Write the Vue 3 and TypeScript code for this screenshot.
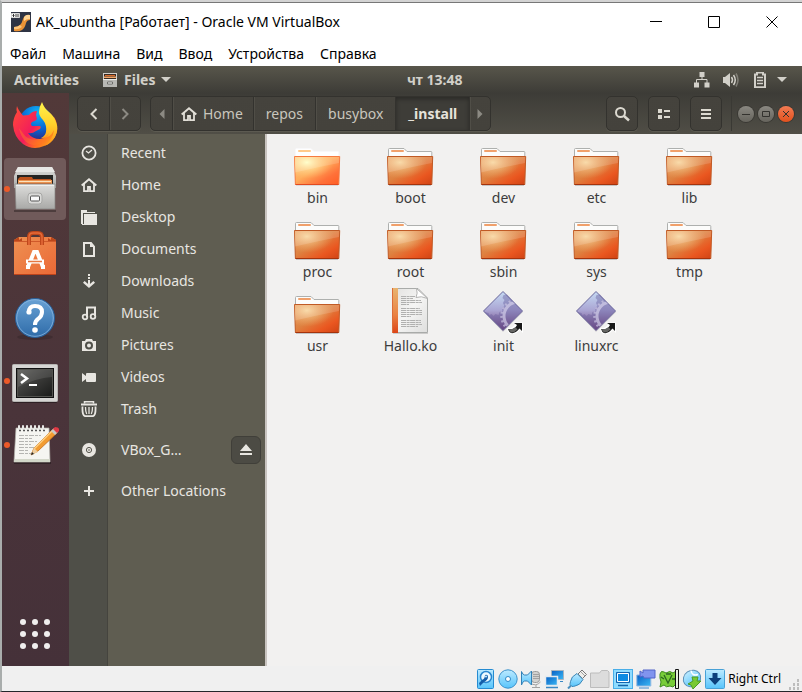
<script setup lang="ts">
interface Place {
  label: string
  icon: string
  spaced?: boolean
  ejectable?: boolean
}

interface Entry {
  name: string
  icon: string
}

interface Launcher {
  name: string
  icon: string
  running?: boolean
  active?: boolean
}

const menus: string[] = ['Файл', 'Машина', 'Вид', 'Ввод', 'Устройства', 'Справка']

const launchers: Launcher[] = [
  { name: 'Firefox', icon: 'firefox' },
  { name: 'Files', icon: 'cabinet', running: true, active: true },
  { name: 'Ubuntu Software', icon: 'software' },
  { name: 'Help', icon: 'help' },
  { name: 'Terminal', icon: 'terminal', running: true },
  { name: 'Text Editor', icon: 'notepad', running: true },
]

const places: Place[] = [
  { label: 'Recent', icon: 'p-recent' },
  { label: 'Home', icon: 'p-home' },
  { label: 'Desktop', icon: 'p-desktop' },
  { label: 'Documents', icon: 'p-document' },
  { label: 'Downloads', icon: 'p-download' },
  { label: 'Music', icon: 'p-music' },
  { label: 'Pictures', icon: 'p-camera' },
  { label: 'Videos', icon: 'p-video' },
  { label: 'Trash', icon: 'p-trash' },
  { label: 'VBox_G…', icon: 'p-disc', spaced: true, ejectable: true },
  { label: 'Other Locations', icon: 'p-plus', spaced: true },
]

const entries: Entry[] = [
  { name: 'bin', icon: 'folder-lit' },
  { name: 'boot', icon: 'folder' },
  { name: 'dev', icon: 'folder' },
  { name: 'etc', icon: 'folder' },
  { name: 'lib', icon: 'folder' },
  { name: 'proc', icon: 'folder' },
  { name: 'root', icon: 'folder' },
  { name: 'sbin', icon: 'folder' },
  { name: 'sys', icon: 'folder' },
  { name: 'tmp', icon: 'folder' },
  { name: 'usr', icon: 'folder' },
  { name: 'Hallo.ko', icon: 'text-file' },
  { name: 'init', icon: 'exec-link' },
  { name: 'linuxrc', icon: 'exec-link' },
]

const devices: Entry[] = [
  { name: 'Hard disks', icon: 's-disk' },
  { name: 'Optical drives', icon: 's-optical' },
  { name: 'Audio', icon: 's-audio' },
  { name: 'Network', icon: 's-network' },
  { name: 'USB', icon: 's-usb' },
  { name: 'Shared folders', icon: 's-shared' },
  { name: 'Display', icon: 's-display' },
  { name: 'Recording', icon: 's-record' },
  { name: 'Execution engine', icon: 's-engine' },
  { name: 'Mouse integration', icon: 's-mouse' },
  { name: 'Keyboard capture', icon: 's-host' },
]
</script>

<template>
  <svg class="defs" aria-hidden="true">
    <defs>
      <linearGradient id="g-orange" x1="0" y1="0" x2="1" y2="1">
        <stop offset="0" stop-color="#e9985c" /><stop offset=".45" stop-color="#de8241" /><stop offset=".75" stop-color="#ea5720" /><stop offset="1" stop-color="#cf4314" />
      </linearGradient>
      <radialGradient id="g-glow" cx=".27" cy=".2" r=".6">
        <stop offset="0" stop-color="#f8d59c" /><stop offset="1" stop-color="#f0b070" stop-opacity="0" />
      </radialGradient>
      <linearGradient id="g-lit" x1="0" y1="0" x2="1" y2="1">
        <stop offset="0" stop-color="#ffc47c" /><stop offset=".45" stop-color="#ffad5c" /><stop offset=".75" stop-color="#ff7139" /><stop offset="1" stop-color="#ff5d24" />
      </linearGradient>
      <radialGradient id="g-litglow" cx=".27" cy=".2" r=".6">
        <stop offset="0" stop-color="#ffffc4" /><stop offset="1" stop-color="#ffcf80" stop-opacity="0" />
      </radialGradient>
      <linearGradient id="g-strip" x1="0" y1="0" x2="0" y2="1">
        <stop offset="0" stop-color="#e8b470" /><stop offset=".6" stop-color="#ea8142" /><stop offset="1" stop-color="#dc4517" />
      </linearGradient>
      <linearGradient id="g-paper" x1="0" y1="0" x2="1" y2="1">
        <stop offset="0" stop-color="#e2e1df" /><stop offset=".5" stop-color="#f5f5f4" /><stop offset="1" stop-color="#dededd" />
      </linearGradient>
      <linearGradient id="g-diamond" x1="0" y1="0" x2="0" y2="1">
        <stop offset="0" stop-color="#c5daf3" /><stop offset=".48" stop-color="#aaa5d3" /><stop offset="1" stop-color="#68366f" />
      </linearGradient>
      <linearGradient id="g-blue" x1="0" y1="0" x2="0" y2="1">
        <stop offset="0" stop-color="#bdeaff" /><stop offset="1" stop-color="#57c4fb" />
      </linearGradient>
      <linearGradient id="g-deep" x1="0" y1="0" x2="1" y2="1">
        <stop offset="0" stop-color="#0860c4" /><stop offset="1" stop-color="#3bb8f5" />
      </linearGradient>
      <linearGradient id="g-metal" x1="0" y1="0" x2="0" y2="1">
        <stop offset="0" stop-color="#dededc" /><stop offset="1" stop-color="#a9a9a7" />
      </linearGradient>
      <linearGradient id="g-fox" x1="0" y1=".2" x2="1" y2=".9">
        <stop offset="0" stop-color="#ff453b" /><stop offset=".45" stop-color="#f21c5c" /><stop offset=".7" stop-color="#ff6c22" /><stop offset="1" stop-color="#ffb118" />
      </linearGradient>
      <linearGradient id="g-flame" x1="0" y1="0" x2="0" y2="1">
        <stop offset="0" stop-color="#fff34c" /><stop offset=".5" stop-color="#ffd22b" /><stop offset="1" stop-color="#ff9019" />
      </linearGradient>
      <radialGradient id="g-globe" cx=".55" cy=".2" r=".8">
        <stop offset="0" stop-color="#10b5f6" /><stop offset=".6" stop-color="#0766d4" /><stop offset="1" stop-color="#2b2c86" />
      </radialGradient>
      <linearGradient id="g-bag" x1="0" y1="0" x2="1" y2="1">
        <stop offset="0" stop-color="#ee9152" /><stop offset="1" stop-color="#eb6836" />
      </linearGradient>
      <linearGradient id="g-help" x1="0" y1="0" x2="0" y2="1">
        <stop offset="0" stop-color="#69a2d5" /><stop offset="1" stop-color="#2e6ba8" />
      </linearGradient>
      <linearGradient id="g-term" x1="0" y1="0" x2="1" y2="1">
        <stop offset="0" stop-color="#5b5b58" /><stop offset=".45" stop-color="#3c3c3a" /><stop offset="1" stop-color="#191a19" />
      </linearGradient>
    </defs>

    <!-- file icons -->
    <symbol id="folder" viewBox="0 0 48 48">
      <path d="M2 47.5h42" stroke="#00000030" />
      <path d="M1.500 19V11.500q0-1 1-1H17l3 3h24q.8 0 .8.8V19z" fill="#fcfcfb" stroke="#aeb0ae" />
      <rect x="4" y="12" width="13" height="2" rx="1" fill="#f0a06b" />
      <path d="M.5 18.500h45.200L44.800 46.500H1.400z" fill="url(#g-orange)" stroke="#c05a25" />
      <path d="M.8 19h44.700l-.8 27H1.500z" fill="url(#g-glow)" />
      <path d="M1 19h44l-.1 6Q24 29 1 34.500z" fill="#fff" opacity=".15" />
      <path d="M1.500 46.500h43" stroke="#a5330c" />
    </symbol>
    <symbol id="folder-lit" viewBox="0 0 48 48">
      <path d="M2 47.500h42" stroke="#00000018" />
      <path d="M1.500 19V11.500q0-1 1-1H17l3 3h24q.8 0 .8.800V19z" fill="#fff" stroke="#f8f8fa" />
      <rect x="4" y="12" width="13" height="2" rx="1" fill="#ffca8b" />
      <path d="M.5 18.500h45.200L44.800 46.500H1.400z" fill="url(#g-lit)" stroke="#f77b40" />
      <path d="M.8 19h44.700l-.8 27H1.500z" fill="url(#g-litglow)" />
      <path d="M1 19h44l-.1 6Q24 29 1 34.500z" fill="#fff" opacity=".15" />
      <path d="M1.500 46.500h43" stroke="#e24a20" />
    </symbol>
    <symbol id="text-file" viewBox="0 0 48 48">
      <path d="M6 47.500h35" stroke="#00000028" />
      <path d="M5.500 2.500H31L40.500 12v34.500h-35z" fill="url(#g-paper)" stroke="#a9aba9" />
      <path d="M5 2h6v45H5z" fill="url(#g-strip)" />
      <path d="M5.500 2v45" stroke="#dc6c38" />
      <path d="M29.500 2.500q1.500 5-.5 9 5-2 11.500 1z" fill="#fff" stroke="#b4b4b3" />
      <path d="M14 10.500h14M14 12.500h12M14 14.500h20M14 16.500h21M14 18.500h8M14 22.500h19M14 24.500h21M14 26.500h21M14 28.500h21M14 30.500h10M14 34.500h20M14 36.500h20M14 38.500h21M14 40.500h17" stroke="#b0b0af" stroke-dasharray="5 .6 3 .5" />
    </symbol>
    <clipPath id="diamond-clip"><path d="M23 6 42 25 23 44 4 25z" /></clipPath>
    <symbol id="exec-link" viewBox="0 0 48 48">
      <path d="M23 7l20 19-20 20L4 26z" fill="#00000020" />
      <path d="M23 5.500 42.500 25 23 44.500 3.500 25z" fill="url(#g-diamond)" stroke="#68649a" stroke-linejoin="round" />
      <path d="M4.500 26l4 1 1 2 2-1 2 2 2-2 3 1 1-3 3-1-.5-3 2.500-2-1.500-3 1.500-3-2-2 1-3 3.500-.5L42 25 27 40l-4 4z" fill="#655b9b" opacity=".42" />
      <circle cx="38" cy="30" r="14" fill="none" stroke="#d9d4ec" stroke-width="3" opacity=".65" clip-path="url(#diamond-clip)" />
      <circle cx="38" cy="30" r="16.500" fill="none" stroke="#c9c2e1" stroke-width="2.500" stroke-dasharray="2 2.500" opacity=".7" clip-path="url(#diamond-clip)" />
      <path d="M27 42q6 1 8-4l-3-1.500h11V47l-3-3q-4 5-10 4-3-2-3-6z" fill="#fff" />
      <path d="M28 43q7 1 9-4l-3-2h8v8l-2.500-2.500Q35 48 31 47q-2-1-3-4z" fill="#191919" />
      <path d="M28 43q5 1 7.500-2l2 2.500Q34 47 31 46.500z" fill="#666664" />
    </symbol>

    <!-- launcher icons -->
    <symbol id="firefox" viewBox="0 0 48 48">
      <circle cx="25" cy="22" r="17" fill="url(#g-globe)" />
      <path d="M6 5q-1 4 0 6-4 6-4 13 1 12 10 19 10 7 21 2 10-4 13-14 1-9-3-15-3 8-4 14-3 7-10 8-8 0-12-6 4 1 8-2l4-2q2-3-1-3h-7q-2-2 0-4 4-1 5-3l-1-4 1-4q-5 0-8 4l-6 .5Q7 9 6 5z" fill="url(#g-fox)" />
      <path d="M31 1q-3 5-3 10 0 4 4 8 4 5 3 12-1 4-5 6 9 1 13-8-1 10-10 16 7-2 11-9 4-8 1-15-2-6-7-10-5-4-7-10z" fill="url(#g-flame)" />
      <path d="M11 31q5 8 14 8 8-1 13-7-4 13-16 12Q11 42 8 27z" fill="#ff7d24" opacity=".45" />
    </symbol>
    <symbol id="cabinet" viewBox="0 0 48 48">
      <path d="M3 46h42" stroke="#00000050" stroke-width="2" />
      <path d="M7 2h34l4 9v12H3V11z" fill="url(#g-metal)" />
      <path d="M7 2h34l3 5H4z" fill="#e7e7e5" />
      <path d="M6 10h36v11H6z" fill="#252422" />
      <path d="M7 14l2-2h12l1 2h18v7H7z" fill="#bd521c" />
      <path d="M7 15h34v5H7z" fill="#eb9450" /><path d="M8 16.500h32" stroke="#fae1bd" /><path d="M8 18.500h32" stroke="#d36b2c" />
      <path d="M4 19h40v25H5z" fill="url(#g-metal)" stroke="#858583" stroke-width=".7" />
      <path d="M5 20.500h38" stroke="#efefee" />
      <rect x="17" y="28" width="14" height="11" rx="3" fill="#dadad8" stroke="#a7a7a5" />
      <rect x="19.500" y="31" width="9" height="5" rx="1" fill="#fafafa" stroke="#555" />
    </symbol>
    <symbol id="mini-cabinet" viewBox="0 0 16 16">
      <path d="M1 1h14v14H1z" fill="#cfcfcb" /><path d="M2 2h12v5H2z" fill="#3a2c22" />
      <path d="M3 3h10v1H3z" fill="#d86a2b" /><path d="M2 4.500h12V6H2z" fill="#f2a768" />
      <path d="M1 7h14v8H1z" fill="#b8b8b4" /><path d="M1 7.500h14" stroke="#ecece8" />
      <path d="M5.500 10h5v2h-5z" fill="#f6f6f4" stroke="#6d6d69" />
    </symbol>
    <symbol id="software" viewBox="0 0 48 48">
      <path d="M3 11l5-3h32l5 3v35H3z" fill="url(#g-bag)" />
      <path d="M3 11l5-3v3l3-2v3H3zM45 11l-5-3v3l-3-2v3h8z" fill="#bc461a" />
      <path d="M3 12.500h42" stroke="#cf592a" /><path d="M3 45.500h42" stroke="#bd431b" />
      <path d="M18 16V8q0-4 4-4h5q4 0 4 4v8" fill="none" stroke="#bf471b" stroke-width="4" />
      <path d="M18 16V8q0-4 4-4h5q4 0 4 4v8" fill="none" stroke="#e66b3a" stroke-width="1.500" />
      <path d="M17 38l6-15h3l6 15M15 32.500h18M15 38h4M30 38h4" fill="none" stroke="#fff" stroke-width="4" />
      <path d="M17 32.500h14" stroke="#e77742" stroke-width="1.500" />
    </symbol>
    <symbol id="help" viewBox="0 0 48 48">
      <ellipse cx="24" cy="44" rx="18" ry="3" fill="#00000026" />
      <circle cx="24" cy="25" r="19.500" fill="url(#g-help)" stroke="#285f99" />
      <circle cx="24" cy="25" r="18.300" fill="none" stroke="#8ab6df" stroke-width=".8" />
      <path d="M18 19q0-6 6-6 7 0 7 6 0 4-4 7-3 2-3 6" fill="none" stroke="#fff" stroke-width="4" />
      <circle cx="18" cy="19" r="2.600" fill="#fff" /><circle cx="24" cy="37" r="2.800" fill="#fff" />
    </symbol>
    <symbol id="terminal" viewBox="0 0 48 48">
      <rect x="2" y="44" width="44" height="2" rx="1" fill="#00000060" />
      <rect x="1.500" y="7.500" width="45" height="37" rx="1" fill="#d6d5d3" stroke="#b6b5b3" />
      <rect x="5" y="11" width="38" height="30" fill="#111" />
      <rect x="6.500" y="12.500" width="35" height="27" fill="url(#g-term)" stroke="#53534f" />
      <path d="M7 13h34v7Q25 21 7 30z" fill="#fff" opacity=".1" />
      <path d="M10 17l6 4.500-6 4.500" fill="none" stroke="#fff" stroke-width="2.500" /><path d="M18 28h8" stroke="#fff" stroke-width="2" />
    </symbol>
    <symbol id="notepad" viewBox="0 0 48 48">
      <path d="M3 41h37v2H3z" fill="#00000050" />
      <path d="M5 7h33l1 34H3z" fill="#f5f5f1" stroke="#b2b1aa" stroke-width=".7" />
      <path d="M4 38h35v3H3z" fill="#d3d7c9" />
      <path d="M8 8V5M12 8V5M16 8V5M20 8V5M24 8V5M28 8V5M32 8V5" stroke="#e9e9e7" stroke-width="2" stroke-linecap="round" />
      <path d="M8 9.500h26" stroke="#555" stroke-width="1.500" stroke-dasharray="2 2" />
      <path d="M8 14.500h22M8 17.500h13M8 20.500h18M8 23.500h12M8 26.500h16M8 29.500h9M8 32.500h12" stroke="#b5b5b2" stroke-dasharray="5 1 3 1" />
      <path d="M42 8l4 4-19 18-7 4 3-7z" fill="#f29c31" stroke="#c36b1c" stroke-width=".8" />
      <path d="M41 10L23 28" stroke="#ffd184" stroke-width="1.500" />
      <path d="M20 34l3-7 4 4z" fill="#edcd9e" /><path d="M20 34l1-3 2 2z" fill="#222" />
      <path d="M40 10l3-3 4 4-3 3z" fill="#c8c8c5" /><path d="M42 8l2-2q5 0 4 4l-2 2z" fill="#df3944" />
    </symbol>

    <!-- sidebar icons -->
    <symbol id="p-recent" viewBox="0 0 16 16"><circle cx="8" cy="8" r="6.600" fill="none" stroke="currentColor" stroke-width="1.800" /><path d="M5 6l2.500 2L11 5" fill="none" stroke="currentColor" stroke-width="1.300" /></symbol>
    <symbol id="p-home" viewBox="0 0 16 16"><path d="M.7 8.500 8 2.300l7.300 6.200" fill="none" stroke="currentColor" stroke-width="2" /><path d="M3 7v7.200h4V10h2v4.200h4V7" fill="none" stroke="currentColor" stroke-width="1.800" /></symbol>
    <symbol id="p-desktop" viewBox="0 0 16 16"><path d="M0 1h6v2h8v1H2v11H0z" fill="currentColor" /><path d="M3 5h13v11H1v-1h2z" fill="currentColor" /></symbol>
    <symbol id="p-document" viewBox="0 0 16 16"><path d="M3 2h7l3 3.500V15H3z" fill="none" stroke="currentColor" stroke-width="2" /><path d="M9 1.500V6h4" fill="currentColor" /></symbol>
    <symbol id="p-download" viewBox="0 0 16 16"><path d="M7 1h2v2H7zM7 4h2v2H7zM7 7h2v5H7z" fill="currentColor" /><path d="M2.800 8.800 8 13.500l5.200-4.700" fill="none" stroke="currentColor" stroke-width="2.400" /></symbol>
    <symbol id="p-music" viewBox="0 0 16 16"><path d="M6 12V2.500h8V11" fill="none" stroke="currentColor" stroke-width="2" /><circle cx="4" cy="12" r="2.300" fill="none" stroke="currentColor" stroke-width="1.800" /><circle cx="12" cy="11.500" r="2.300" fill="none" stroke="currentColor" stroke-width="1.800" /></symbol>
    <symbol id="p-camera" viewBox="0 0 16 16"><path fill-rule="evenodd" d="M1 4h3l1-2h6l1 2h3v10H1zM8 4.500a4 4 0 1 0 0 8 4 4 0 0 0 0-8zM8 6.500a2 2 0 1 1 0 4 2 2 0 0 1 0-4z" fill="currentColor" /></symbol>
    <symbol id="p-video" viewBox="0 0 16 16"><path d="M1 4l4 3V5q0-1 1-1h8q1 0 1 1v7q0 1-1 1H6q-1 0-1-1v-2l-4 3z" fill="currentColor" /></symbol>
    <symbol id="p-trash" viewBox="0 0 16 16"><path d="M3.500 2.500V.8h9v1.700" fill="none" stroke="currentColor" stroke-width="1.500" /><path d="M0 3.500h16" stroke="currentColor" stroke-width="2" /><path d="M1.500 5.500q-.5 9.700 3 9.700h7q3.500 0 3-9.700" fill="none" stroke="currentColor" stroke-width="1.800" /><path d="M4.500 6q0 5 1.200 7M8 6v7M11.500 6q0 5-1.200 7" fill="none" stroke="currentColor" stroke-width="1.300" /></symbol>
    <symbol id="p-disc" viewBox="0 0 16 16"><circle cx="8" cy="8" r="7" fill="currentColor" /><circle cx="8" cy="8" r="2.600" fill="none" stroke="#55544c" stroke-width="1" /><circle cx="8" cy="8" r=".8" fill="#55544c" /></symbol>
    <symbol id="p-plus" viewBox="0 0 16 16"><path d="M8 3v10M3 8h10" stroke="currentColor" stroke-width="2" /></symbol>

    <!-- status icons -->
    <symbol id="s-disk" viewBox="0 0 20 20"><rect x="2.500" y=".5" width="16" height="19" rx="1" fill="url(#g-blue)" stroke="#258bd1" /><circle cx="11" cy="8" r="5.500" fill="#eefaff" stroke="#2a86cf" stroke-width="1.500" /><path d="M10 6q3-1 3 2 0 3-4 5l-4 4-1-3 3-3q3-1 3-5z" fill="#145da9" /><circle cx="11" cy="7.500" r="1" fill="#cdefff" /></symbol>
    <symbol id="s-optical" viewBox="0 0 20 20"><circle cx="10" cy="10" r="9.200" fill="url(#g-blue)" stroke="#3b91cb" /><circle cx="10" cy="10" r="2.500" fill="#fff" stroke="#2e88c6" /></symbol>
    <symbol id="s-audio" viewBox="0 0 20 20"><rect x="10.500" y="2.500" width="8" height="11" rx="3" fill="#d1d1cf" stroke="#9a9a9a" /><path d="M12 5.500h6M12 7.500h6M12 9.500h6M9 14q6 4 10.500-1M15 16v2.500M11 18.500h8" stroke="#a2a2a2" fill="none" /><path d="M.5 2.500q1 3 3 3.500h3l4-4v14l-4-4h-3q-2 .5-3 4z" fill="url(#g-blue)" stroke="#3181b8" /></symbol>
    <symbol id="s-network" viewBox="0 0 20 20"><path d="M7.500 1.500h12v9h-12z" fill="url(#g-deep)" stroke="#a8b4be" /><path d="M16 12.500h3" stroke="#3988c4" /><path d="M1.500 7.500h12v9h-12z" fill="url(#g-deep)" stroke="#e4ebf0" stroke-width="1.500" /><path d="M2 18.500h12" stroke="#3988c4" stroke-width="1.500" /></symbol>
    <symbol id="s-usb" viewBox="0 0 20 20"><path d="M11 5l4-4 4.500 4.500-4 4z" fill="#eeeeeb" stroke="#777" /><path d="M14.500 3.500l1 1M16.500 5.500l1 1" stroke="#555" /><path d="M10 4.500l6 6q-3 6-8 6.500-2 .5-3 .500L3 15.500q0-1 .5-3Q4 7.500 10 4.500z" fill="url(#g-blue)" stroke="#3c86b6" /><path d="M4 16.500l-3 3" stroke="#4b8fbe" stroke-width="2" /></symbol>
    <symbol id="s-shared" viewBox="0 0 20 20"><path d="M.5 18.500V4h9l2-2.500h6L19 3v15.500z" fill="#dcdcdc" stroke="#bcbcbc" /></symbol>
    <symbol id="s-display" viewBox="0 0 20 20"><rect x=".5" y=".5" width="19" height="19" fill="#8fdcff" stroke="#49aee8" /><path d="M3.500 3.500h13v10h-13z" fill="#0d8be3" stroke="#1464af" /><path d="M4.500 4.500h11v8h-11z" fill="none" stroke="#fff" /><path d="M5 16.500h10" stroke="#1565aa" stroke-width="1.500" /></symbol>
    <symbol id="s-record" viewBox="0 0 20 20"><path d="M.8 6h14v11H.8z" fill="url(#g-deep)" stroke="#91b9e3" /><path d="M3 19h10" stroke="#3c88cc" /><path d="M4 2l3 2V1h12v8H8L7 7 4 8z" fill="#8194ee" stroke="#5265c8" /></symbol>
    <symbol id="s-engine" viewBox="0 0 20 20"><path d="M1 5q1-4 4-2l2 1q4-3 7 0l3-2v5l-1 3 1 5-3 3-3-1q-4 2-6-1l-4 2 1-5-1-4z" fill="#78cd38" stroke="#3f8b20" /><path d="M5 6l4 8 4-8M2 8l3 2M13 10h3M7 5h5" fill="none" stroke="#2c6720" stroke-width="1.300" /><path d="M16.500.5h3v19h-3z" fill="#e7f2df" stroke="#111" /></symbol>
    <symbol id="s-mouse" viewBox="0 0 20 20"><ellipse cx="10" cy="9.500" rx="9" ry="8" fill="url(#g-blue)" stroke="#5b91b8" transform="rotate(-35 10 9.500)" /><path d="M9 1.500q1 6 7 4" fill="none" stroke="#fff" stroke-width="1.500" /><path d="M10 8h6l-1 4h4l-8 8-2-4-3-1 5-3z" fill="#78c934" stroke="#4c9c25" /></symbol>
    <symbol id="s-host" viewBox="0 0 20 20"><rect x=".5" y=".5" width="19" height="19" rx="1" fill="url(#g-blue)" stroke="#48a1d6" /><path d="M7.500 4h5v5h4L10 16 3.500 9h4z" fill="#0c3f7b" /></symbol>
  </svg>

  <main class="window">
    <header class="title-bar">
      <svg class="app-icon" viewBox="0 0 20 20" aria-hidden="true">
        <path d="M0 0h20v20H0z" fill="#2e3444" />
        <path d="M3 15q4 0 6-2 2-2 3-6 1-4 7-4v5q-3 0-4 3-1 5-4 7-3 2-8 1z" fill="#eb9336" />
        <path d="M13 5q2-3 6-2v4q-4 0-6 2z" fill="#ffd594" /><path d="M3 15q4 0 6-2l2 2q-4 3-8 2z" fill="#fcc57a" />
        <path d="M.5 1.500h8v4h-8z" fill="#fff" stroke="#d8d8d8" /><path d="M2.500 2v3M1.500 3.500h2M5 2v3M7 2v3" stroke="#333" />
      </svg>
      <h1>AK_ubuntha [Работает] - Oracle VM VirtualBox</h1>
      <div class="win-controls">
        <button type="button" aria-label="Свернуть"><svg viewBox="0 0 14 14"><path d="M1 6.500h12" /></svg></button>
        <button type="button" aria-label="Развернуть"><svg viewBox="0 0 14 14"><path d="M1.500 1.500h11v11h-11z" /></svg></button>
        <button type="button" aria-label="Закрыть"><svg viewBox="0 0 14 14"><path d="M1.500 1.500l11 11M12.500 1.500l-11 11" /></svg></button>
      </div>
    </header>

    <nav class="menu-bar">
      <button v-for="menu in menus" :key="menu" type="button">{{ menu }}</button>
    </nav>

    <div class="top-panel">
      <button type="button" class="panel-text">Activities</button>
      <button type="button" class="panel-text app-menu">
        <svg class="mini-cabinet" viewBox="0 0 16 16" aria-hidden="true"><use href="#mini-cabinet" /></svg>
        Files
        <svg class="caret" viewBox="0 0 10 5" aria-hidden="true"><path d="M0 0h10L5 5z" /></svg>
      </button>
      <button type="button" class="panel-text clock">чт 13:48</button>
      <button type="button" class="indicators" aria-label="System">
        <svg viewBox="0 0 16 16"><path d="M5.500 0h5v5h-5zM0 10.500h5v5H0zM10.500 10.500h5v5h-5z" /><path d="M8 5v3M2.500 11V7.500h10.500V11" fill="none" stroke="currentColor" /></svg>
        <svg viewBox="0 0 16 16"><path d="M0 5h2l5-4v14l-5-4H0z" /><path d="M8.500 5q2 3 0 6M10.500 3q3.500 5 0 10" fill="none" stroke="currentColor" stroke-width="1.500" /><path d="M13 1.500q4 6.500 0 13" fill="none" stroke="currentColor" stroke-width="1.500" opacity=".4" /></svg>
        <svg viewBox="0 0 16 16"><path d="M3 2.500h2v-2h6v2h2v12.700H3z" fill="none" stroke="currentColor" stroke-width="2" /><path d="M5 5.500h6M5 8.500h6M5 11.500h6" fill="none" stroke="currentColor" stroke-width="1.500" /></svg>
        <svg class="caret" viewBox="0 0 10 5"><path d="M0 0h10L5 5z" /></svg>
      </button>
    </div>

    <div class="desktop">
      <nav class="dock" aria-label="Launcher">
        <button v-for="app in launchers" :key="app.name" type="button" :class="{ active: app.active, running: app.running }" :aria-label="app.name">
          <svg viewBox="0 0 48 48"><use :href="`#${app.icon}`" /></svg>
        </button>
        <button type="button" class="show-apps" aria-label="Show Applications">
          <svg viewBox="0 0 48 48">
            <g fill="#f0eeee">
              <circle cx="12" cy="12" r="3" /><circle cx="24" cy="12" r="3" /><circle cx="36" cy="12" r="3" />
              <circle cx="12" cy="24" r="3" /><circle cx="24" cy="24" r="3" /><circle cx="36" cy="24" r="3" />
              <circle cx="12" cy="36" r="3" /><circle cx="24" cy="36" r="3" /><circle cx="36" cy="36" r="3" />
            </g>
          </svg>
        </button>
      </nav>

      <section class="files">
        <div class="header-bar">
          <div class="linked">
            <button type="button" class="nav-btn" aria-label="Back"><svg viewBox="0 0 16 16"><path d="M10.500 3 5.500 8l5 5" /></svg></button>
            <button type="button" class="nav-btn dim" aria-label="Forward"><svg viewBox="0 0 16 16"><path d="M5.500 3l5 5-5 5" /></svg></button>
          </div>
          <div class="linked path">
            <button type="button" class="scroll dim" aria-label="Scroll left"><svg viewBox="0 0 16 16"><path class="solid" d="M10.500 3v10l-5-5z" /></svg></button>
            <button type="button" class="crumb home"><svg viewBox="0 0 16 16"><use href="#p-home" /></svg>Home</button>
            <button type="button" class="crumb">repos</button>
            <button type="button" class="crumb">busybox</button>
            <button type="button" class="crumb current">_install</button>
            <button type="button" class="scroll dim" aria-label="Scroll right"><svg viewBox="0 0 16 16"><path class="solid" d="M5.500 3v10l5-5z" /></svg></button>
          </div>
          <div class="tools">
            <button type="button" aria-label="Search"><svg viewBox="0 0 16 16"><circle cx="6.500" cy="6.500" r="4.500" /><path d="M10 10l5 4.500" stroke-width="2.500" /></svg></button>
            <button type="button" aria-label="List view"><svg viewBox="0 0 16 16"><path class="solid" d="M2 3h4v4H2zM2 9h4v4H2zM8 4h6v2H8zM8 10h6v2H8z" /></svg></button>
            <button type="button" aria-label="Menu"><svg viewBox="0 0 16 16"><path class="solid" d="M3 3h10v2H3zM3 7h10v2H3zM3 11h10v2H3z" /></svg></button>
          </div>
          <div class="round-controls">
            <button type="button" aria-label="Minimize"><svg viewBox="0 0 10 10"><path d="M1 5.500h8" /></svg></button>
            <button type="button" aria-label="Maximize"><svg viewBox="0 0 10 10"><path d="M1.500 2.500h7v5h-7z" /></svg></button>
            <button type="button" class="close" aria-label="Close"><svg viewBox="0 0 10 10"><path d="M2 2l6 6M8 2L2 8" /></svg></button>
          </div>
        </div>

        <div class="browser">
          <nav class="places">
            <div v-for="place in places" :key="place.label" class="place" :class="{ spaced: place.spaced }">
              <a href="#">
                <svg viewBox="0 0 16 16" aria-hidden="true"><use :href="`#${place.icon}`" /></svg>
                <span>{{ place.label }}</span>
              </a>
              <button v-if="place.ejectable" type="button" class="eject" aria-label="Eject">
                <svg viewBox="0 0 16 16"><path d="M8 2l6 7H2zM2 11h12v2H2z" /></svg>
              </button>
            </div>
          </nav>
          <div class="grid">
            <a v-for="entry in entries" :key="entry.name" href="#" class="entry">
              <svg viewBox="0 0 48 48" aria-hidden="true"><use :href="`#${entry.icon}`" /></svg>
              <span>{{ entry.name }}</span>
            </a>
          </div>
        </div>
      </section>
    </div>

    <footer class="status-bar">
      <svg v-for="device in devices" :key="device.name" viewBox="0 0 20 20" role="img" :aria-label="device.name"><use :href="`#${device.icon}`" /></svg>
      <span class="host-key">Right Ctrl</span>
      <svg class="grip" viewBox="0 0 10 12" aria-hidden="true"><path d="M8 0h2v3H8zM4 4h2v3H4zM8 4h2v3H8zM0 8h2v3H0zM4 8h2v3H4zM8 8h2v3H8z" fill="#bdbdbd" /></svg>
    </footer>
  </main>
</template>

<style>
body {
  margin: 0;
}
</style>

<style scoped>
.defs {
  position: absolute;
  width: 0;
  height: 0;
}

.window {
  box-sizing: border-box;
  min-height: 100vh;
  display: flex;
  flex-direction: column;
  border-top: 2px solid #d3d3d3;
  border-left: 2px solid #a9adac;
  border-bottom: 1px solid #24262b;
  background: #fff;
  font-family: "Noto Sans", "Open Sans", sans-serif;
}

button {
  margin: 0;
  padding: 0;
  border: 0;
  background: none;
  color: inherit;
  font: inherit;
}

svg {
  display: block;
  flex: none;
}

a {
  color: inherit;
  text-decoration: none;
}

.title-bar {
  display: flex;
  align-items: center;
  height: 37px;
  padding: 0 1px 0 9px;
  border-top: 1px solid #777;
  color: #000;
}

.app-icon {
  width: 20px;
  height: 20px;
}

h1 {
  margin: 0 0 0 5px;
  font-size: 14px;
  font-weight: 400;
}

.win-controls {
  display: flex;
  margin-left: auto;
}

.win-controls button {
  display: grid;
  place-items: center;
  width: 58px;
  height: 36px;
}

.win-controls svg {
  width: 14px;
  height: 14px;
  fill: none;
  stroke: #000;
}

.menu-bar {
  display: flex;
  gap: 16px;
  height: 26px;
  padding-left: 8px;
  color: #000;
  font-size: 14px;
}

.top-panel {
  display: flex;
  align-items: center;
  height: 27px;
  padding: 0 15px 0 12px;
  background: linear-gradient(#58564b, #3d3c37);
  color: #d2d0c9;
}

.panel-text {
  font-size: 14px;
  font-weight: 700;
}

.app-menu {
  display: flex;
  align-items: center;
  gap: 6px;
  margin-left: 23px;
}

.mini-cabinet {
  width: 16px;
  height: 16px;
}

.caret {
  width: 10px;
  height: 5px;
  fill: currentColor;
}

.clock {
  margin: 0 auto;
  padding-left: 4px;
}

.indicators {
  display: flex;
  align-items: center;
  gap: 13px;
}

.indicators svg:not(.caret) {
  width: 16px;
  height: 16px;
  fill: currentColor;
}

.indicators .caret {
  margin-left: -4px;
}

.desktop {
  flex: 1;
  display: flex;
}

.dock {
  box-sizing: border-box;
  flex: none;
  display: flex;
  flex-direction: column;
  gap: 2px;
  width: 67px;
  padding: 1px 3px 1px 2px;
  background: linear-gradient(#523939, #4a343a 55%, #453139);
}

.dock button {
  position: relative;
  display: grid;
  place-items: center;
  height: 62px;
  border-radius: 4px;
}

.dock button.active {
  background: #705a5a;
}

.dock button svg {
  width: 48px;
  height: 48px;
}

.dock button.running::before {
  content: "";
  position: absolute;
  left: 0;
  top: 28px;
  width: 6px;
  height: 6px;
  border-radius: 50%;
  background: #ec5a29;
}

.dock .show-apps {
  margin-top: auto;
}

.files {
  flex: 1;
  min-width: 0;
  display: flex;
  flex-direction: column;
}

.header-bar {
  display: flex;
  align-items: center;
  height: 41px;
  padding: 0 8px;
  background: linear-gradient(#3d3c37, #504e46);
  color: #dcd9d0;
}

.header-bar svg {
  width: 16px;
  height: 16px;
  fill: none;
  stroke: currentColor;
  stroke-width: 2;
}

.header-bar .solid {
  fill: currentColor;
  stroke: none;
}

.linked {
  display: flex;
  height: 35px;
  box-sizing: border-box;
  border: 1px solid #33322e;
  border-radius: 5px;
  box-shadow: 0 1px #5c5a51;
  background: linear-gradient(#45433d, #44423c);
  overflow: hidden;
}

.linked button {
  display: flex;
  align-items: center;
  justify-content: center;
}

.linked button + button {
  border-left: 1px solid #33322e;
  box-shadow: inset 1px 0 #504e47;
}

.nav-btn {
  width: 31px;
}

.dim {
  color: #8c8a83;
}

.path {
  margin-left: 9px;
}

.scroll {
  width: 21px;
}

.crumb {
  padding: 0 12px;
  color: #c9c6bd;
  font-size: 14px;
}

.crumb.home {
  gap: 6px;
  padding: 0 10px 0 8px;
}

.crumb svg {
  color: #e2dfd7;
}

.linked .crumb.current {
  background: #3e3d38;
  box-shadow: inset 0 2px 4px #2a2926;
  color: #e5e2da;
  font-weight: 700;
}

.tools {
  display: flex;
  gap: 10px;
  margin-left: auto;
  padding-right: 9px;
  border-right: 1px solid #3a3934;
}

.tools button {
  display: grid;
  place-items: center;
  box-sizing: border-box;
  width: 32px;
  height: 35px;
  border: 1px solid #33322e;
  border-radius: 5px;
  box-shadow: 0 1px #5c5a51;
  background: linear-gradient(#45433d, #44423c);
}

.round-controls {
  display: flex;
  gap: 4px;
  margin-left: 6px;
}

.round-controls button {
  display: grid;
  place-items: center;
  box-sizing: border-box;
  width: 16px;
  height: 16px;
  border-radius: 50%;
  background: linear-gradient(#8a8881, #66645d);
  box-shadow: 0 0 0 1px #3a3934;
  color: #33322e;
}

.round-controls .close {
  background: linear-gradient(#f37b53, #e2511d);
}

.round-controls svg {
  width: 10px;
  height: 10px;
  stroke-width: 1;
}

.browser {
  flex: 1;
  display: flex;
}

.places {
  box-sizing: border-box;
  flex: none;
  width: 198px;
  padding-top: 3px;
  border-right: 2px solid #c8c3bf;
  background: linear-gradient(90deg, #4f4f48 38px, #45443e 38px, #45443e 39px, #5f5d51 39px);
  color: #e8e6e1;
  font-size: 14px;
}

.place {
  display: flex;
  align-items: center;
  height: 32px;
  padding-right: 4px;
}

.place.spaced {
  margin-top: 9px;
}

.place a {
  flex: 1;
  display: flex;
  align-items: center;
  gap: 24px;
  padding-left: 12px;
}

.place a svg {
  width: 16px;
  height: 16px;
}

.place a span {
  padding-bottom: 2px;
}

.eject {
  display: grid;
  place-items: center;
  box-sizing: border-box;
  width: 30px;
  height: 28px;
  border: 1px solid #403f39;
  border-radius: 6px;
  background: #4c4b44;
}

.eject svg {
  width: 16px;
  height: 16px;
  fill: currentColor;
}

.grid {
  flex: 1;
  min-width: 0;
  display: grid;
  grid-template-columns: repeat(auto-fill, 93px);
  grid-auto-rows: 74px;
  align-content: start;
  padding: 4px 60px 0 4px;
  background: #f2f1f0;
  color: #3c3c3c;
  font-size: 14px;
}

.entry {
  display: flex;
  flex-direction: column;
  align-items: center;
}

.entry svg {
  width: 48px;
  height: 48px;
}

.entry span {
  line-height: 24px;
}

.status-bar {
  display: flex;
  align-items: center;
  justify-content: flex-end;
  gap: 3px;
  height: 25px;
  padding-right: 3px;
  background: #f0f0f0;
  color: #000;
  font-size: 12px;
}

.status-bar svg {
  width: 20px;
  height: 20px;
}

.status-bar .grip {
  width: 10px;
  height: 12px;
  align-self: flex-end;
  margin-left: 5px;
}
</style>
